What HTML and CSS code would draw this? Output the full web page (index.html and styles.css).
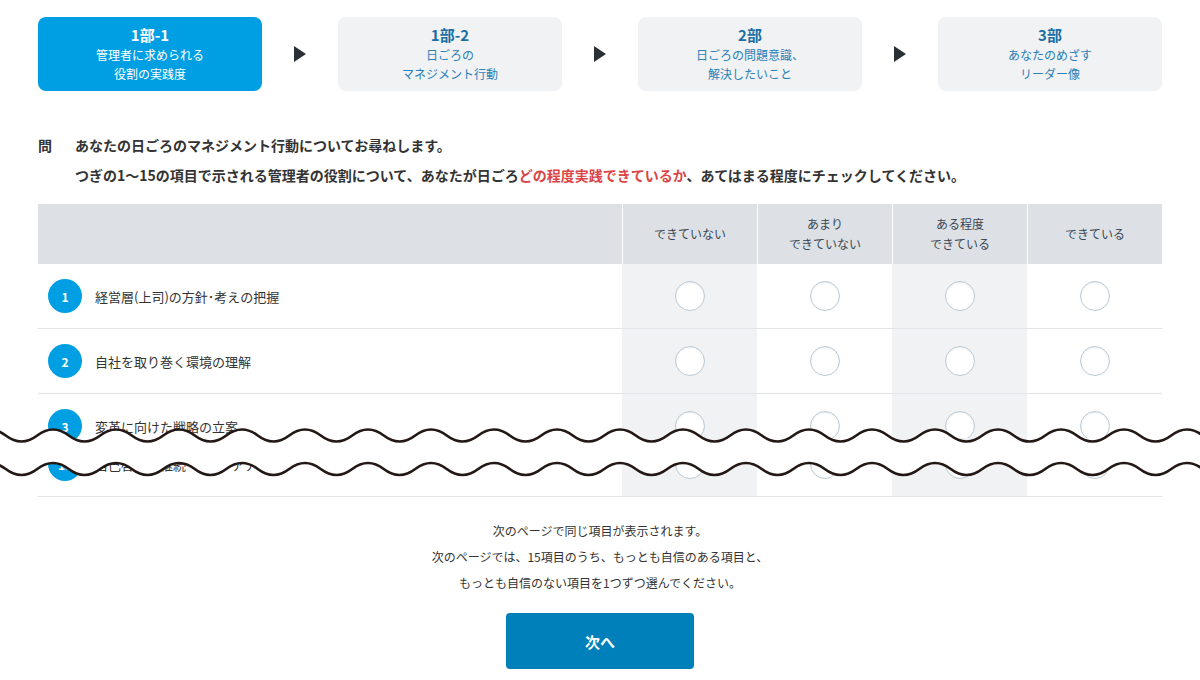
FILE: index.html
```html
<!DOCTYPE html>
<html lang="ja">
<head>
<meta charset="utf-8">
<title>アンケート</title>
<link rel="stylesheet" href="styles.css">
</head>
<body>
<div class="page">
  <div class="steps">
    <div class="step active">
      <div class="step-title">1部-1</div>
      <div class="step-sub">管理者に求められる<br>役割の実践度</div>
    </div>
    <div class="arrow"><span class="tri"></span></div>
    <div class="step">
      <div class="step-title">1部-2</div>
      <div class="step-sub">日ごろの<br>マネジメント行動</div>
    </div>
    <div class="arrow"><span class="tri"></span></div>
    <div class="step">
      <div class="step-title">2部</div>
      <div class="step-sub">日ごろの問題意識、<br>解決したいこと</div>
    </div>
    <div class="arrow"><span class="tri"></span></div>
    <div class="step">
      <div class="step-title">3部</div>
      <div class="step-sub">あなたのめざす<br>リーダー像</div>
    </div>
  </div>

  <div class="question">
    <div class="q-mark">問</div>
    <div class="q-body">
      <p>あなたの日ごろのマネジメント行動についてお尋ねします。</p>
      <p>つぎの1〜15の項目で示される管理者の役割について、あなたが日ごろ<span class="red">どの程度実践できているか</span>、あてはまる程度にチェックしてください。</p>
    </div>
  </div>

  <div class="table">
    <div class="thead">
      <div class="th th-blank"></div>
      <div class="th">できていない</div>
      <div class="th">あまり<br>できていない</div>
      <div class="th">ある程度<br>できている</div>
      <div class="th">できている</div>
    </div>

    <div class="row">
      <div class="item"><span class="num">1</span><span class="label">経営層(上司)の方針･考えの把握</span></div>
      <div class="cell g"><span class="radio"></span></div>
      <div class="cell"><span class="radio"></span></div>
      <div class="cell g"><span class="radio"></span></div>
      <div class="cell"><span class="radio"></span></div>
    </div>
    <div class="row">
      <div class="item"><span class="num">2</span><span class="label">自社を取り巻く環境の理解</span></div>
      <div class="cell g"><span class="radio"></span></div>
      <div class="cell"><span class="radio"></span></div>
      <div class="cell g"><span class="radio"></span></div>
      <div class="cell"><span class="radio"></span></div>
    </div>

    <div class="cut">
      <div class="clip-top">
        <div class="row">
          <div class="item"><span class="num">3</span><span class="label">変革に向けた戦略の立案</span></div>
          <div class="cell g"><span class="radio"></span></div>
          <div class="cell"><span class="radio"></span></div>
          <div class="cell g"><span class="radio"></span></div>
          <div class="cell"><span class="radio"></span></div>
        </div>
      </div>
      <div class="clip-bottom">
        <div class="row">
          <div class="item"><span class="num">15</span><span class="label">自己啓発の継続･キャリアアップ</span></div>
          <div class="cell g"><span class="radio"></span></div>
          <div class="cell"><span class="radio"></span></div>
          <div class="cell g"><span class="radio"></span></div>
          <div class="cell"><span class="radio"></span></div>
        </div>
      </div>
      <svg class="wave" width="1200" height="80" viewBox="0 0 1200 80" aria-hidden="true">
        <path class="wave-fill" d="M -25.75 25.5 q 15.75 -12 31.5 0 t 31.5 0 t 31.5 0 t 31.5 0 t 31.5 0 t 31.5 0 t 31.5 0 t 31.5 0 t 31.5 0 t 31.5 0 t 31.5 0 t 31.5 0 t 31.5 0 t 31.5 0 t 31.5 0 t 31.5 0 t 31.5 0 t 31.5 0 t 31.5 0 t 31.5 0 t 31.5 0 t 31.5 0 t 31.5 0 t 31.5 0 t 31.5 0 t 31.5 0 t 31.5 0 t 31.5 0 t 31.5 0 t 31.5 0 t 31.5 0 t 31.5 0 t 31.5 0 t 31.5 0 t 31.5 0 t 31.5 0 t 31.5 0 t 31.5 0 t 31.5 0 t 31.5 0 L 1234.25 59 q -15.75 12 -31.5 0 t -31.5 0 t -31.5 0 t -31.5 0 t -31.5 0 t -31.5 0 t -31.5 0 t -31.5 0 t -31.5 0 t -31.5 0 t -31.5 0 t -31.5 0 t -31.5 0 t -31.5 0 t -31.5 0 t -31.5 0 t -31.5 0 t -31.5 0 t -31.5 0 t -31.5 0 t -31.5 0 t -31.5 0 t -31.5 0 t -31.5 0 t -31.5 0 t -31.5 0 t -31.5 0 t -31.5 0 t -31.5 0 t -31.5 0 t -31.5 0 t -31.5 0 t -31.5 0 t -31.5 0 t -31.5 0 t -31.5 0 t -31.5 0 t -31.5 0 t -31.5 0 t -31.5 0 Z"/>
        <path class="wave-line" d="M -25.75 25.5 q 15.75 -12 31.5 0 t 31.5 0 t 31.5 0 t 31.5 0 t 31.5 0 t 31.5 0 t 31.5 0 t 31.5 0 t 31.5 0 t 31.5 0 t 31.5 0 t 31.5 0 t 31.5 0 t 31.5 0 t 31.5 0 t 31.5 0 t 31.5 0 t 31.5 0 t 31.5 0 t 31.5 0 t 31.5 0 t 31.5 0 t 31.5 0 t 31.5 0 t 31.5 0 t 31.5 0 t 31.5 0 t 31.5 0 t 31.5 0 t 31.5 0 t 31.5 0 t 31.5 0 t 31.5 0 t 31.5 0 t 31.5 0 t 31.5 0 t 31.5 0 t 31.5 0 t 31.5 0 t 31.5 0"/>
        <path class="wave-line" d="M -25.75 59 q 15.75 -12 31.5 0 t 31.5 0 t 31.5 0 t 31.5 0 t 31.5 0 t 31.5 0 t 31.5 0 t 31.5 0 t 31.5 0 t 31.5 0 t 31.5 0 t 31.5 0 t 31.5 0 t 31.5 0 t 31.5 0 t 31.5 0 t 31.5 0 t 31.5 0 t 31.5 0 t 31.5 0 t 31.5 0 t 31.5 0 t 31.5 0 t 31.5 0 t 31.5 0 t 31.5 0 t 31.5 0 t 31.5 0 t 31.5 0 t 31.5 0 t 31.5 0 t 31.5 0 t 31.5 0 t 31.5 0 t 31.5 0 t 31.5 0 t 31.5 0 t 31.5 0 t 31.5 0 t 31.5 0"/>
      </svg>
    </div>
  </div>

  <div class="note">
    <p>次のページで同じ項目が表示されます。</p>
    <p>次のページでは、15項目のうち、もっとも自信のある項目と、</p>
    <p>もっとも自信のない項目を1つずつ選んでください。</p>
  </div>

  <div class="actions">
    <button class="next" type="button">次へ</button>
  </div>
</div>
</body>
</html>
```

FILE: styles.css
```css
* {
  box-sizing: border-box;
}

html, body {
  margin: 0;
  padding: 0;
  background: #ffffff;
}

body {
  font-family: "Noto Sans CJK JP", "Noto Sans", sans-serif;
  color: #333333;
  width: 1200px;
  height: 680px;
  overflow: hidden;
}

.page {
  padding: 17px 38px 0;
}

/* Steps */
.steps {
  display: flex;
  align-items: stretch;
  height: 74px;
}

.step {
  width: 224px;
  flex: none;
  background: #f0f2f4;
  border-radius: 8px;
  padding: 8px 0 8px;
  text-align: center;
}

.step-title {
  font-size: 15px;
  font-weight: 700;
  line-height: 20px;
  color: #1a6ea3;
}

.step-sub {
  font-size: 12px;
  line-height: 19px;
  color: #2b80b8;
}

.step.active {
  background: #009fe3;
}

.step.active .step-title,
.step.active .step-sub {
  color: #ffffff;
}

.arrow {
  flex: 1;
  display: flex;
  align-items: center;
  justify-content: center;
}

.tri {
  width: 0;
  height: 0;
  border-left: 12px solid #2b2f36;
  border-top: 8.5px solid transparent;
  border-bottom: 8.5px solid transparent;
}

/* Question */
.question {
  display: flex;
  margin-top: 39px;
  font-size: 14px;
  font-weight: 700;
  line-height: 30px;
  color: #333333;
}

.q-mark {
  width: 37px;
  flex: none;
}

.q-body p {
  margin: 0;
}

.red {
  color: #dc4545;
}

/* Table */
.table {
  margin-top: 14px;
}

.thead {
  display: grid;
  grid-template-columns: 584px repeat(4, 135px);
  height: 60px;
}

.th {
  background: #dde1e6;
  display: flex;
  align-items: center;
  justify-content: center;
  text-align: center;
  font-size: 12px;
  line-height: 20px;
  color: #3a4652;
  border-left: 1px solid #ffffff;
}

.th.th-blank {
  border-left: none;
}

.row {
  display: grid;
  grid-template-columns: 584px repeat(4, 135px);
  height: 65px;
  border-bottom: 1px solid #e2e4e7;
  flex: none;
}

.item {
  display: flex;
  align-items: center;
  padding-left: 10px;
}

.num {
  width: 34px;
  height: 34px;
  border-radius: 50%;
  background: #009fe3;
  color: #ffffff;
  font-size: 12px;
  font-weight: 700;
  display: flex;
  align-items: center;
  justify-content: center;
  flex: none;
}

.label {
  margin-left: 13px;
  font-size: 13px;
  color: #333333;
}

.cell {
  display: flex;
  align-items: center;
  justify-content: center;
}

.cell.g {
  background: #f1f2f4;
}

.radio {
  width: 30px;
  height: 30px;
  border-radius: 50%;
  background: #ffffff;
  border: 1px solid #b9cad6;
  box-shadow: inset 0 1px 2px rgba(120, 150, 170, 0.15);
}

/* Cut (omitted rows) */
.cut {
  position: relative;
}

.clip-top {
  height: 44px;
  overflow: hidden;
}

.clip-bottom {
  height: 59px;
  overflow: hidden;
  display: flex;
  flex-direction: column;
  justify-content: flex-end;
}

.wave {
  position: absolute;
  left: -38px;
  top: 16px;
  overflow: visible;
}

.wave-fill {
  fill: #ffffff;
  stroke: none;
}

.wave-line {
  fill: none;
  stroke: #231815;
  stroke-width: 2.6;
}

/* Note */
.note {
  margin-top: 21px;
  text-align: center;
  font-size: 12px;
  line-height: 26px;
  color: #333333;
}

.note p {
  margin: 0;
}

.actions {
  display: flex;
  justify-content: center;
  margin-top: 17px;
}

.next {
  width: 188px;
  height: 56px;
  border: none;
  border-radius: 4px;
  background: #0080bb;
  color: #ffffff;
  font-family: "Noto Sans CJK JP", "Noto Sans", sans-serif;
  font-size: 15px;
  font-weight: 700;
  cursor: pointer;
}
```
